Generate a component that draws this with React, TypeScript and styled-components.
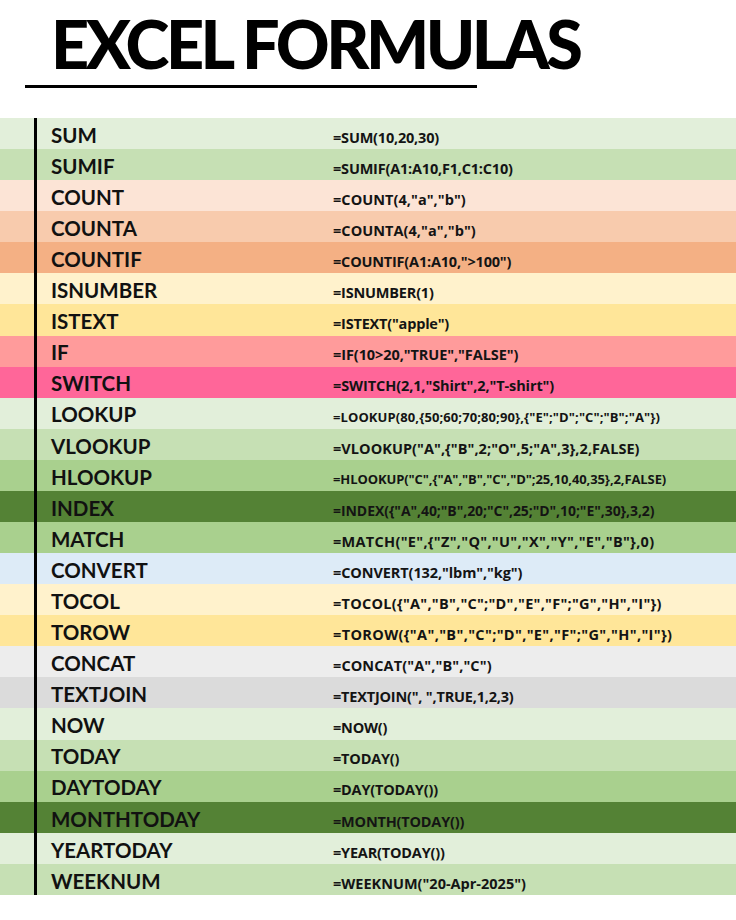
import React from "react";
import styled, { createGlobalStyle } from "styled-components";

const Global = createGlobalStyle`
  html, body { margin: 0; padding: 0; background: #ffffff; }
  body { font-family: "Lato", "Liberation Sans", sans-serif; color: #111111; }
`;

const Page = styled.div`
  width: 736px;
  height: 920px;
  overflow: hidden;
  background: #ffffff;
  display: flex;
  flex-direction: column;
`;

const Header = styled.header`
  display: flex;
  flex-direction: column;
  padding: 5px 0 0 0;
`;

const Title = styled.h1`
  margin: 0 0 0 51px;
  font-family: "Lato", "Liberation Sans", sans-serif;
  font-weight: 900;
  font-size: 66.5px;
  line-height: 76px;
  letter-spacing: -3.5px;
  color: #000000;
`;

const Rule = styled.div`
  margin: 4px 0 0 25px;
  width: 452px;
  height: 3px;
  background: #000000;
`;

const Table = styled.div`
  margin-top: 30px;
  display: flex;
  flex-direction: column;
`;

const Row = styled.div<{ $bg: string }>`
  height: 31.08px;
  display: grid;
  grid-template-columns: 34px 3px 296px 1fr;
  align-items: center;
  background: ${(p) => p.$bg};
`;

const Stub = styled.div``;

const Line = styled.div`
  align-self: stretch;
  background: #000000;
`;

const Name = styled.div`
  padding: 3px 0 0 14px;
  font-family: "Lato", "Liberation Sans", sans-serif;
  font-weight: 700;
  font-size: 20.5px;
  line-height: 1;
  color: #111111;
  white-space: nowrap;
`;

const Formula = styled.div<{ $size: number; $track: number }>`
  font-family: "Open Sans", "Liberation Sans", sans-serif;
  font-weight: 700;
  font-size: ${(p) => p.$size}px;
  letter-spacing: ${(p) => p.$track}px;
  line-height: 1;
  padding-top: 9px;
  color: #141414;
  white-space: nowrap;
`;

type Item = { name: string; formula: string; bg: string; size?: number; track?: number };

const items: Item[] = [
  { name: "SUM", formula: "=SUM(10,20,30)", bg: "#e2efda" },
  { name: "SUMIF", formula: "=SUMIF(A1:A10,F1,C1:C10)", bg: "#c6e0b4" },
  { name: "COUNT", formula: "=COUNT(4,\"a\",\"b\")", bg: "#fce4d6", track: 0.05 },
  { name: "COUNTA", formula: "=COUNTA(4,\"a\",\"b\")", bg: "#f8cbad", track: 0.05 },
  { name: "COUNTIF", formula: "=COUNTIF(A1:A10,\">100\")", bg: "#f4b084" },
  { name: "ISNUMBER", formula: "=ISNUMBER(1)", bg: "#fff2cc" },
  { name: "ISTEXT", formula: "=ISTEXT(\"apple\")", bg: "#ffe699" },
  { name: "IF", formula: "=IF(10>20,\"TRUE\",\"FALSE\")", bg: "#ff9b9b", track: -0.08 },
  { name: "SWITCH", formula: "=SWITCH(2,1,\"Shirt\",2,\"T-shirt\")", bg: "#ff6699", track: -0.1 },
  { name: "LOOKUP", formula: "=LOOKUP(80,{50;60;70;80;90},{\"E\";\"D\";\"C\";\"B\";\"A\"})", bg: "#e2efda", size: 13, track: 0.1 },
  { name: "VLOOKUP", formula: "=VLOOKUP(\"A\",{\"B\",2;\"O\",5;\"A\",3},2,FALSE)", bg: "#c6e0b4", track: 0.05 },
  { name: "HLOOKUP", formula: "=HLOOKUP(\"C\",{\"A\",\"B\",\"C\",\"D\";25,10,40,35},2,FALSE)", bg: "#a9d08e", size: 13, track: -0.1 },
  { name: "INDEX", formula: "=INDEX({\"A\",40;\"B\",20;\"C\",25;\"D\",10;\"E\",30},3,2)", bg: "#548235", size: 14, track: -0.06 },
  { name: "MATCH", formula: "=MATCH(\"E\",{\"Z\",\"Q\",\"U\",\"X\",\"Y\",\"E\",\"B\"},0)", bg: "#a9d08e", track: 0.3 },
  { name: "CONVERT", formula: "=CONVERT(132,\"lbm\",\"kg\")", bg: "#ddebf7", track: -0.1 },
  { name: "TOCOL", formula: "=TOCOL({\"A\",\"B\",\"C\";\"D\",\"E\",\"F\";\"G\",\"H\",\"I\"})", bg: "#fff2cc", track: 0.26 },
  { name: "TOROW", formula: "=TOROW({\"A\",\"B\",\"C\";\"D\",\"E\",\"F\";\"G\",\"H\",\"I\"})", bg: "#ffe699", track: 0.36 },
  { name: "CONCAT", formula: "=CONCAT(\"A\",\"B\",\"C\")", bg: "#ededed", track: 0.1 },
  { name: "TEXTJOIN", formula: "=TEXTJOIN(\", \",TRUE,1,2,3)", bg: "#dbdbdb" },
  { name: "NOW", formula: "=NOW()", bg: "#e2efda" },
  { name: "TODAY", formula: "=TODAY()", bg: "#c6e0b4" },
  { name: "DAYTODAY", formula: "=DAY(TODAY())", bg: "#a9d08e" },
  { name: "MONTHTODAY", formula: "=MONTH(TODAY())", bg: "#548235" },
  { name: "YEARTODAY", formula: "=YEAR(TODAY())", bg: "#e2efda" },
  { name: "WEEKNUM", formula: "=WEEKNUM(\"20-Apr-2025\")", bg: "#c6e0b4", track: 0.0 },
];

export default function App() {
  return (
    <>
      <Global />
      <Page>
        <Header>
          <Title>EXCEL FORMULAS</Title>
          <Rule />
        </Header>
        <Table>
          {items.map((it) => (
            <Row key={it.name} $bg={it.bg}>
              <Stub />
              <Line />
              <Name>{it.name}</Name>
              <Formula $size={it.size ?? 14.5} $track={it.track ?? -0.2}>
                {it.formula}
              </Formula>
            </Row>
          ))}
        </Table>
      </Page>
    </>
  );
}
